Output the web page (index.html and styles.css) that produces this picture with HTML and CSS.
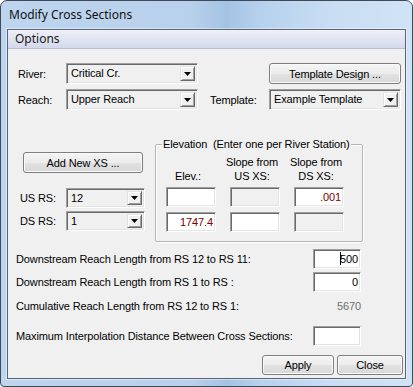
FILE: index.html
```html
<!DOCTYPE html>
<html>
<head>
<meta charset="utf-8">
<title>Modify Cross Sections</title>
<link rel="stylesheet" href="styles.css">
</head>
<body>
<div class="window">
  <div class="titlebar">Modify Cross Sections</div>
  <div class="client">
    <div class="menubar"><span class="menu-item">Options</span></div>
    <div class="content">
      <div class="top-grid">
        <span class="lbl">River:</span>
        <div class="combo"><span class="combo-text">Critical Cr.</span><span class="combo-btn"><svg width="7" height="4" viewBox="0 0 7 4"><path d="M0 0H7L3.5 4Z" fill="#000"/></svg></span></div>
        <span></span>
        <button class="btn tpl-btn">Template Design ...</button>
        <span class="lbl">Reach:</span>
        <div class="combo"><span class="combo-text">Upper Reach</span><span class="combo-btn"><svg width="7" height="4" viewBox="0 0 7 4"><path d="M0 0H7L3.5 4Z" fill="#000"/></svg></span></div>
        <span class="lbl tpl-lbl">Template:</span>
        <div class="combo"><span class="combo-text">Example Template</span><span class="combo-btn"><svg width="7" height="4" viewBox="0 0 7 4"><path d="M0 0H7L3.5 4Z" fill="#000"/></svg></span></div>
      </div>

      <div class="middle">
        <div class="left-col">
          <button class="btn add-btn">Add New XS ...</button>
          <div class="rs-row first">
            <span class="lbl rs-lbl">US RS:</span>
            <div class="combo rs"><span class="combo-text">12</span><span class="combo-btn"><svg width="7" height="4" viewBox="0 0 7 4"><path d="M0 0H7L3.5 4Z" fill="#000"/></svg></span></div>
          </div>
          <div class="rs-row">
            <span class="lbl rs-lbl">DS RS:</span>
            <div class="combo rs"><span class="combo-text">1</span><span class="combo-btn"><svg width="7" height="4" viewBox="0 0 7 4"><path d="M0 0H7L3.5 4Z" fill="#000"/></svg></span></div>
          </div>
        </div>

        <div class="group">
          <div class="group-title">Elevation&nbsp; (Enter one per River Station)</div>
          <div class="group-grid">
            <div class="hdr">Elev.:</div>
            <div class="hdr">Slope from<br>US XS:</div>
            <div class="hdr">Slope from<br>DS XS:</div>
            <div class="tb"></div>
            <div class="tb disabled"></div>
            <div class="tb red">.001</div>
            <div class="tb red low">1747.4</div>
            <div class="tb low"></div>
            <div class="tb disabled low"></div>
          </div>
        </div>
      </div>

      <div class="rows">
        <div class="row r1">
          <span class="row-lbl">Downstream Reach Length from RS 12 to RS 11:</span>
          <div class="tb wide"><span class="caret"></span>500</div>
        </div>
        <div class="row r2">
          <span class="row-lbl">Downstream Reach Length from RS 1 to RS :</span>
          <div class="tb wide">0</div>
        </div>
        <div class="row r3">
          <span class="row-lbl">Cumulative Reach Length from RS 12 to RS 1:</span>
          <span class="cum-val">5670</span>
        </div>
        <div class="row r4">
          <span class="row-lbl">Maximum Interpolation Distance Between Cross Sections:</span>
          <div class="tb wide"></div>
        </div>
      </div>

      <div class="buttons">
        <button class="btn apply-btn">Apply</button>
        <button class="btn close-btn">Close</button>
      </div>
    </div>
  </div>
</div>
</body>
</html>
```

FILE: styles.css
```css
html, body {
  margin: 0;
  padding: 0;
  background: #ffffff;
}

body {
  font-family: "Liberation Sans", Arial, sans-serif;
  font-size: 11px;
  letter-spacing: -0.12px;
  color: #000;
}

.window {
  box-sizing: border-box;
  width: 413px;
  height: 387px;
  border: 1px solid #404a56;
  border-radius: 7px 7px 4px 4px;
  background: linear-gradient(90deg, #bdd5ee 0%, #b8d0eb 46%, #a4c3e3 55%, #b6d1ed 63%, #c8ddf3 80%, #d0e3f6 100%);
  padding: 0 6px 7px 6px;
  display: flex;
  flex-direction: column;
  overflow: hidden;
}

.titlebar {
  height: 28px;
  line-height: 28px;
  padding-left: 2px;
  font-family: "Noto Sans", "Open Sans", sans-serif;
  font-size: 12px;
  letter-spacing: 0;
  color: #111;
  white-space: nowrap;
}

.client {
  flex: 1;
  border: 1px solid #586476;
  background: #f0f0f0;
  box-shadow: 0 0 0 1px rgba(255, 255, 255, 0.45);
  display: flex;
  flex-direction: column;
  min-height: 0;
}

.menubar {
  height: 18px;
  line-height: 18px;
  border-bottom: 1px solid #b7bdd4;
  background: linear-gradient(#fafbfd 0px, #eceef6 1px, #dfe3f1 55%, #d4d8eb 100%);
  padding-left: 7px;
  font-family: "Noto Sans", "Open Sans", sans-serif;
  font-size: 12px;
  letter-spacing: 0;
  color: #1a1a1a;
}

.content {
  flex: 1;
  display: flex;
  flex-direction: column;
}

/* ---------- top section ---------- */
.top-grid {
  margin-top: 14px;
  padding-left: 10px;
  display: grid;
  grid-template-columns: 48px 132px 71px 132px;
  grid-template-rows: 21px 21px;
  row-gap: 5px;
  align-items: center;
}

.lbl {
  white-space: nowrap;
}

.tpl-lbl {
  padding-left: 12px;
}

/* ---------- combo ---------- */
.combo {
  box-sizing: border-box;
  height: 21px;
  border-top: 1px solid #a0a0a0;
  border-left: 1px solid #a0a0a0;
  border-right: 1px solid #ffffff;
  border-bottom: 1px solid #ffffff;
  box-shadow: inset 1px 1px 0 #696969, inset -1px -1px 0 #e3e3e3;
  background: #f0f0f0;
  display: flex;
  align-items: stretch;
  padding: 2px;
}

.combo-text {
  flex: 1;
  padding-left: 2px;
  line-height: 15px;
  white-space: nowrap;
  overflow: hidden;
}

.combo-btn {
  width: 15px;
  box-sizing: border-box;
  background: #f0f0f0;
  border-top: 1px solid #e3e3e3;
  border-left: 1px solid #e3e3e3;
  border-right: 1px solid #696969;
  border-bottom: 1px solid #696969;
  box-shadow: inset 1px 1px 0 #ffffff, inset -1px -1px 0 #a0a0a0;
  display: flex;
  align-items: center;
  justify-content: center;
}

.combo-btn svg {
  display: block;
}

/* ---------- buttons ---------- */
.btn {
  box-sizing: border-box;
  font-family: "Liberation Sans", Arial, sans-serif;
  font-size: 11px;
  letter-spacing: -0.12px;
  color: #000;
  border: 1px solid #7e7e7e;
  border-radius: 3px;
  background: linear-gradient(#f4f4f4 0%, #ececec 50%, #e2e2e2 51%, #d8d8d8 100%);
  box-shadow: inset 0 0 0 1px #fbfbfb;
  padding: 0;
  margin: 0;
  white-space: nowrap;
}

.tpl-btn {
  height: 21px;
  width: 132px;
}

/* ---------- middle section ---------- */
.middle {
  margin-top: 27px;
  display: flex;
  align-items: flex-start;
}

.left-col {
  box-sizing: border-box;
  width: 147px;
  padding-left: 12px;
  display: flex;
  flex-direction: column;
}

.add-btn {
  margin-top: 15px;
  margin-left: 3px;
  width: 120px;
  height: 21px;
}

.rs-row {
  display: flex;
  align-items: center;
  margin-top: 3px;
}

.rs-row.first {
  margin-top: 15px;
}

.rs-lbl {
  width: 46px;
}

.combo.rs {
  width: 79px;
  height: 20px;
}

.combo.rs .combo-text {
  line-height: 14px;
}

.group {
  box-sizing: border-box;
  width: 208px;
  margin-top: 7px;
  border: 1px solid #b5b5b5;
  border-radius: 2px;
  box-shadow: inset 1px 1px 0 #ffffff, 1px 1px 0 #ffffff;
  padding: 0 0 9px 10px;
}

.group-title {
  margin: -8px 0 0 -4px;
  padding: 0 1px;
  line-height: 14px;
  background: #f0f0f0;
  width: max-content;
  white-space: nowrap;
}

.group-grid {
  margin-top: 4px;
  display: grid;
  grid-template-columns: 50px 50px 50px;
  grid-template-rows: 28px 20px 21px;
  column-gap: 14px;
  row-gap: 4px;
}

.hdr {
  margin-left: -6px;
  text-align: center;
  line-height: 14px;
  align-self: end;
  white-space: nowrap;
}

/* ---------- text boxes ---------- */
.tb {
  box-sizing: border-box;
  height: 20px;
  border-top: 1px solid #a0a0a0;
  border-left: 1px solid #a0a0a0;
  border-right: 1px solid #ffffff;
  border-bottom: 1px solid #ffffff;
  box-shadow: inset 1px 1px 0 #696969, inset -1px -1px 0 #e3e3e3;
  background: #ffffff;
  text-align: right;
  padding-right: 2px;
  line-height: 18px;
  white-space: nowrap;
  overflow: hidden;
}

.tb.low {
  align-self: end;
}

.tb.disabled {
  background: #f0f0f0;
}

.tb.red {
  color: #800000;
}

.tb.wide {
  width: 48px;
}

.caret {
  display: inline-block;
  width: 0;
  height: 13px;
  border-left: 1px solid #000;
  margin-right: -1px;
  vertical-align: -2px;
}

/* ---------- bottom rows ---------- */
.rows {
  padding: 0 44px 0 8px;
  display: flex;
  flex-direction: column;
}

.row {
  display: flex;
  align-items: center;
  justify-content: space-between;
  height: 20px;
}

.row.r1 { margin-top: 7px; }
.row.r2 { margin-top: 3px; }
.row.r3 { margin-top: 7px; height: 14px; }
.row.r4 { margin-top: 13px; }

.row-lbl {
  white-space: nowrap;
}

.cum-val {
  color: #6f6f6f;
}

.buttons {
  margin-top: 9px;
  padding-right: 2px;
  display: flex;
  justify-content: flex-end;
  gap: 3px;
}

.apply-btn {
  width: 72px;
  height: 20px;
}

.close-btn {
  width: 66px;
  height: 20px;
}
```
